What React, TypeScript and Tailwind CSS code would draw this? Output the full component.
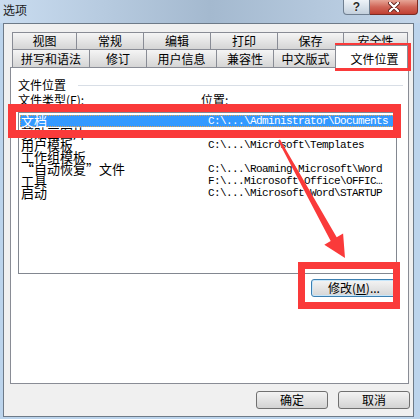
import React from "react";

const cjk = "font-['Noto_Sans_CJK_SC','Noto_Sans',sans-serif]";
const mono = "font-['Liberation_Mono','DejaVu_Sans_Mono',monospace]";

const row1 = [
  { label: "视图", w: "w-[64px]" },
  { label: "常规", w: "w-[67px]" },
  { label: "编辑", w: "w-[67px]" },
  { label: "打印", w: "w-[67px]" },
  { label: "保存", w: "w-[66px]" },
  { label: "安全性", w: "w-[65px] border-r" },
];

const row2 = [
  { label: "拼写和语法", w: "w-[77px]" },
  { label: "修订", w: "w-[57px]" },
  { label: "用户信息", w: "w-[70px]" },
  { label: "兼容性", w: "w-[57px]" },
  { label: "中文版式", w: "w-[64px]" },
];

const files = [
  { name: "文档", path: "C:\\...\\Administrator\\Documents", sel: true },
  { name: "剪贴画图片", path: "" },
  { name: "用户模板", path: "C:\\...\\Microsoft\\Templates" },
  { name: "工作组模板", path: "" },
  { name: "“自动恢复”文件", path: "C:\\...\\Roaming\\Microsoft\\Word" },
  { name: "工具", path: "F:\\...Microsoft Office\\OFFIC…" },
  { name: "启动", path: "C:\\...\\Microsoft\\Word\\STARTUP" },
];

const tabCls =
  "flex h-full items-center justify-center border-t border-l border-[#898c95] bg-linear-to-b from-[#f5f5f5] to-[#d5d5d5] text-[12px] leading-none text-black";

export default function App() {
  return (
    <div className={`relative flex h-[419px] w-[420px] flex-col overflow-hidden bg-[#bcd4ec] ${cjk}`}>
      {/* Title bar */}
      <div className="flex h-[23px] shrink-0 bg-linear-to-r from-[#c9dcf0] via-[#a4b9cf] to-[#c3d6ea]">
        <span className="pl-[3px] pt-[3px] text-[12px] leading-[14px] text-[#1b1b1b]">选项</span>
        <div className="ml-auto mr-[2px] flex h-[15px]">
          <div className="flex w-[27px] items-center justify-center rounded-bl-[4px] border border-t-0 border-[#6f7f91] bg-linear-to-b from-[#eef3f8] to-[#c3d0dd] font-['Liberation_Sans',sans-serif] text-[12px] font-bold leading-none text-[#2a2a2a] [text-shadow:0_0_2px_#fff]">
            ?
          </div>
          <div className="flex w-[48px] items-center justify-center rounded-br-[4px] border border-t-0 border-l-0 border-[#7a2b22] bg-linear-to-b from-[#e6a597] via-[#d06557] to-[#c13f31]">
            <svg width="12" height="10" viewBox="0 0 12 10">
              <path d="M2 1 L10 9 M10 1 L2 9" stroke="#5a1d17" strokeWidth="4" strokeLinecap="round" />
              <path d="M2 1 L10 9 M10 1 L2 9" stroke="#fff" strokeWidth="2.4" strokeLinecap="round" />
            </svg>
          </div>
        </div>
      </div>

      {/* Client area */}
      <div className="ml-[3px] flex h-[394px] w-[411px] flex-col border border-[#6d7a88] bg-[#f0f0f0]">
        {/* Tab rows */}
        <div className="ml-[8px] mt-[8px] flex h-[17px]">
          {row1.map((t) => (
            <div key={t.label} className={`${tabCls} ${t.w}`}>
              {t.label}
            </div>
          ))}
        </div>
        <div className="ml-[8px] flex h-[18px] items-end">
          {row2.map((t) => (
            <div key={t.label} className={`${tabCls} ${t.w}`}>
              {t.label}
            </div>
          ))}
          <div className="relative top-[1px] z-10 -ml-[2px] flex h-[23px] w-[73px] items-center justify-center border border-b-0 border-[#898c95] bg-white pl-[6px] pt-[3px] text-[12px] leading-none text-black">
            文件位置
          </div>
        </div>

        {/* Panel */}
        <div className="ml-[6px] flex h-[317px] w-[399px] flex-col border border-[#898c95] bg-white pl-[7px] pr-[11px]">
          <div className="mt-[10px] flex h-[14px] items-center">
            <span className="text-[12px] leading-[14px] text-black">文件位置</span>
            <div className="-mr-[6px] ml-[12px] h-px flex-1 bg-[#d8dee6]" />
          </div>
          <div className="mt-[1px] flex h-[14px] items-center text-[12px] leading-[14px] text-black">
            <span className="w-[183px]">
              文件类型(<span className="underline">F</span>):
            </span>
            <span>位置:</span>
          </div>
          <div className="mt-[5px] flex h-[162px] w-[379px] flex-col border border-[#828790] bg-white px-[1px] pt-[2px]">
            {files.map((f) => (
              <div
                key={f.name}
                className={`flex h-[12px] items-center border ${
                  f.sel ? "border-dotted border-[#e6a24e] bg-[#3399ff] text-white" : "border-transparent text-black"
                }`}
              >
                <span className="w-[187px] whitespace-nowrap text-[13px] leading-[12px]">{f.name}</span>
                <span className={`${mono} whitespace-nowrap text-[11px] leading-[12px] tracking-[-0.6px]`}>{f.path}</span>
              </div>
            ))}
          </div>
          <div className="mt-[5px] flex justify-end">
            <button className="flex h-[18px] w-[86px] items-center justify-center rounded-[3px] border border-[#3c7fb1] bg-linear-to-b from-[#f4f4f4] to-[#d6d6d6] text-[12px] leading-none text-black shadow-[inset_0_0_0_1px_#c5e6fb]">
              修改(<span className="underline">M</span>)...
            </button>
          </div>
        </div>

        {/* Bottom buttons */}
        <div className="mt-[7px] flex justify-end gap-[10px] pr-[3px]">
          <button className="flex h-[18px] w-[72px] items-center justify-center rounded-[3px] border border-[#707070] bg-linear-to-b from-[#f3f3f3] to-[#d3d3d3] text-[12px] leading-none text-black">
            确定
          </button>
          <button className="flex h-[18px] w-[72px] items-center justify-center rounded-[3px] border border-[#707070] bg-linear-to-b from-[#f3f3f3] to-[#d3d3d3] text-[12px] leading-none text-black">
            取消
          </button>
        </div>
      </div>

      {/* Red annotations */}
      <div className="pointer-events-none absolute left-[335px] top-[43px] h-[28px] w-[76px] border-[7px] border-[#fa3a3a]" />
      <div className="pointer-events-none absolute left-[8px] top-[104px] h-[34px] w-[393px] border-[8px] border-[#fa3a3a]" />
      <div className="pointer-events-none absolute left-[298px] top-[262px] h-[47px] w-[102px] border-[7px] border-[#fa3a3a]" />
      <svg className="pointer-events-none absolute left-0 top-0" width="420" height="419" viewBox="0 0 420 419">
        <polygon
          points="278,140.6 280,139.4 336.7,237.3 343.1,233.5 345,258 324.3,244.8 330.7,240.9"
          fill="#fa3a3a"
        />
      </svg>
    </div>
  );
}
